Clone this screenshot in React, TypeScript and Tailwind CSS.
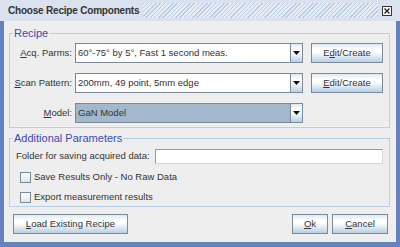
import React from 'react';

const btn =
  'h-[20px] border border-[#7a8a99] bg-[linear-gradient(to_bottom,#dde8f3_0%,#ffffff_30%,#ffffff_45%,#b8cfe5_100%)] text-[9.5px] text-[#333333] flex items-center justify-center';

const Arrow: React.FC = () => (
  <div className="w-[12px] h-full border-l border-[#7a8a99] bg-[linear-gradient(to_bottom,#dde8f3_0%,#ffffff_30%,#ffffff_45%,#b8cfe5_100%)] flex items-center justify-center">
    <svg width="7" height="4" viewBox="0 0 7 4">
      <path d="M0 0 L7 0 L3.5 4 Z" fill="#111111" />
    </svg>
  </div>
);

const Combo: React.FC<{ text: string; selected?: boolean }> = ({ text, selected }) => (
  <div className={`h-[20px] w-[228px] border border-[#7a8a99] flex ${selected ? 'bg-[#a3b8cc]' : 'bg-white'}`}>
    <div className="flex-1 px-[2px] flex items-center text-[9.5px] text-[#333333] whitespace-nowrap overflow-hidden">
      {text}
    </div>
    <Arrow />
  </div>
);

const Check: React.FC<{ label: string }> = ({ label }) => (
  <div className="h-[14px] pl-[10px] flex items-center gap-[3px]">
    <div className="w-[11px] h-[11px] border border-[#7a8a99] bg-[linear-gradient(to_bottom,#ffffff,#dde8f3)]" />
    <span className="text-[9.5px] text-[#333333]">{label}</span>
  </div>
);

const Group: React.FC<{ title: string; className: string; children: React.ReactNode }> = ({ title, className, children }) => (
  <div className={`relative ml-[5px] mr-[6px] border border-[#b8cfe5] ${className}`}>
    <span className="absolute left-[3px] top-[-8px] px-[1px] bg-[#eeeeee] text-[11px] leading-[14px] text-[#3a4bb0]">
      {title}
    </span>
    {children}
  </div>
);

const App: React.FC = () => {
  return (
    <div className="w-[400px] h-[247px] flex flex-col font-['Liberation_Sans',Arial,sans-serif] text-[#333333]">
      <div className="h-[21px] bg-[#d9e2ee] flex items-center pl-[8px] pr-[8px]">
        <span className="text-[10px] font-bold tracking-[-0.2px] whitespace-nowrap">Choose Recipe Components</span>
        <div className="flex-1 h-[15px] ml-[4px] mr-[4px] bg-[repeating-linear-gradient(135deg,#b9cbe0_0px,#b9cbe0_1px,#e6edf6_1px,#e6edf6_3px)]" />
        <svg width="10" height="10" viewBox="0 0 10 10">
          <rect x="0.5" y="0.5" width="9" height="9" fill="#ffffff" stroke="#333333" />
          <path d="M2.5 2.5 L7.5 7.5 M7.5 2.5 L2.5 7.5" stroke="#222222" strokeWidth="1.4" />
        </svg>
      </div>
      <div className="flex-1 bg-[#6382bf] px-[4px] pb-[5px] flex">
        <div className="flex-1 bg-[#eeeeee] flex flex-col pt-[12px]">
          <Group title="Recipe" className="h-[95px] pt-[9px] pl-[4px]">
            <div className="grid grid-cols-[58px_228px_77px] gap-x-[3px] gap-y-[10px] items-center">
              <span className="text-[9.5px] text-right whitespace-nowrap">
                <u>A</u>cq. Parms:
              </span>
              <Combo text="60°-75° by 5°, Fast 1 second meas." />
              <button className={`${btn} ml-[5px]`}>
                E<u>d</u>it/Create
              </button>
              <span className="text-[9.5px] text-right whitespace-nowrap">
                <u>S</u>can Pattern:
              </span>
              <Combo text="200mm, 49 point, 5mm edge" />
              <button className={`${btn} ml-[5px]`}>
                <u>E</u>dit/Create
              </button>
              <span className="text-[9.5px] text-right whitespace-nowrap">
                <u>M</u>odel:
              </span>
              <Combo text="GaN Model" selected />
            </div>
          </Group>
          <Group title="Additional Parameters" className="mt-[10px] h-[69px] pt-[10px]">
            <div className="flex items-center pl-[6px] pr-[6px] gap-[5px]">
              <span className="text-[9.5px] whitespace-nowrap">Folder for saving acquired data:</span>
              <div className="flex-1 h-[15px] bg-white border border-[#8e9cab] border-r-[#d0d8e0] border-b-[#d0d8e0]" />
            </div>
            <div className="mt-[6px] flex flex-col gap-[6px]">
              <Check label="Save Results Only - No Raw Data" />
              <Check label="Export measurement results" />
            </div>
          </Group>
          <div className="mt-[7px] flex items-center pl-[9px] pr-[8px]">
            <button className={`${btn} w-[115px]`}>
              <u>L</u>oad Existing Recipe
            </button>
            <div className="flex-1" />
            <button className={`${btn} w-[36px] border-[#5a6a7a]`}>
              <u>O</u>k
            </button>
            <button className={`${btn} w-[56px] ml-[4px]`}>
              <u>C</u>ancel
            </button>
          </div>
        </div>
      </div>
    </div>
  );
};

export default App;
